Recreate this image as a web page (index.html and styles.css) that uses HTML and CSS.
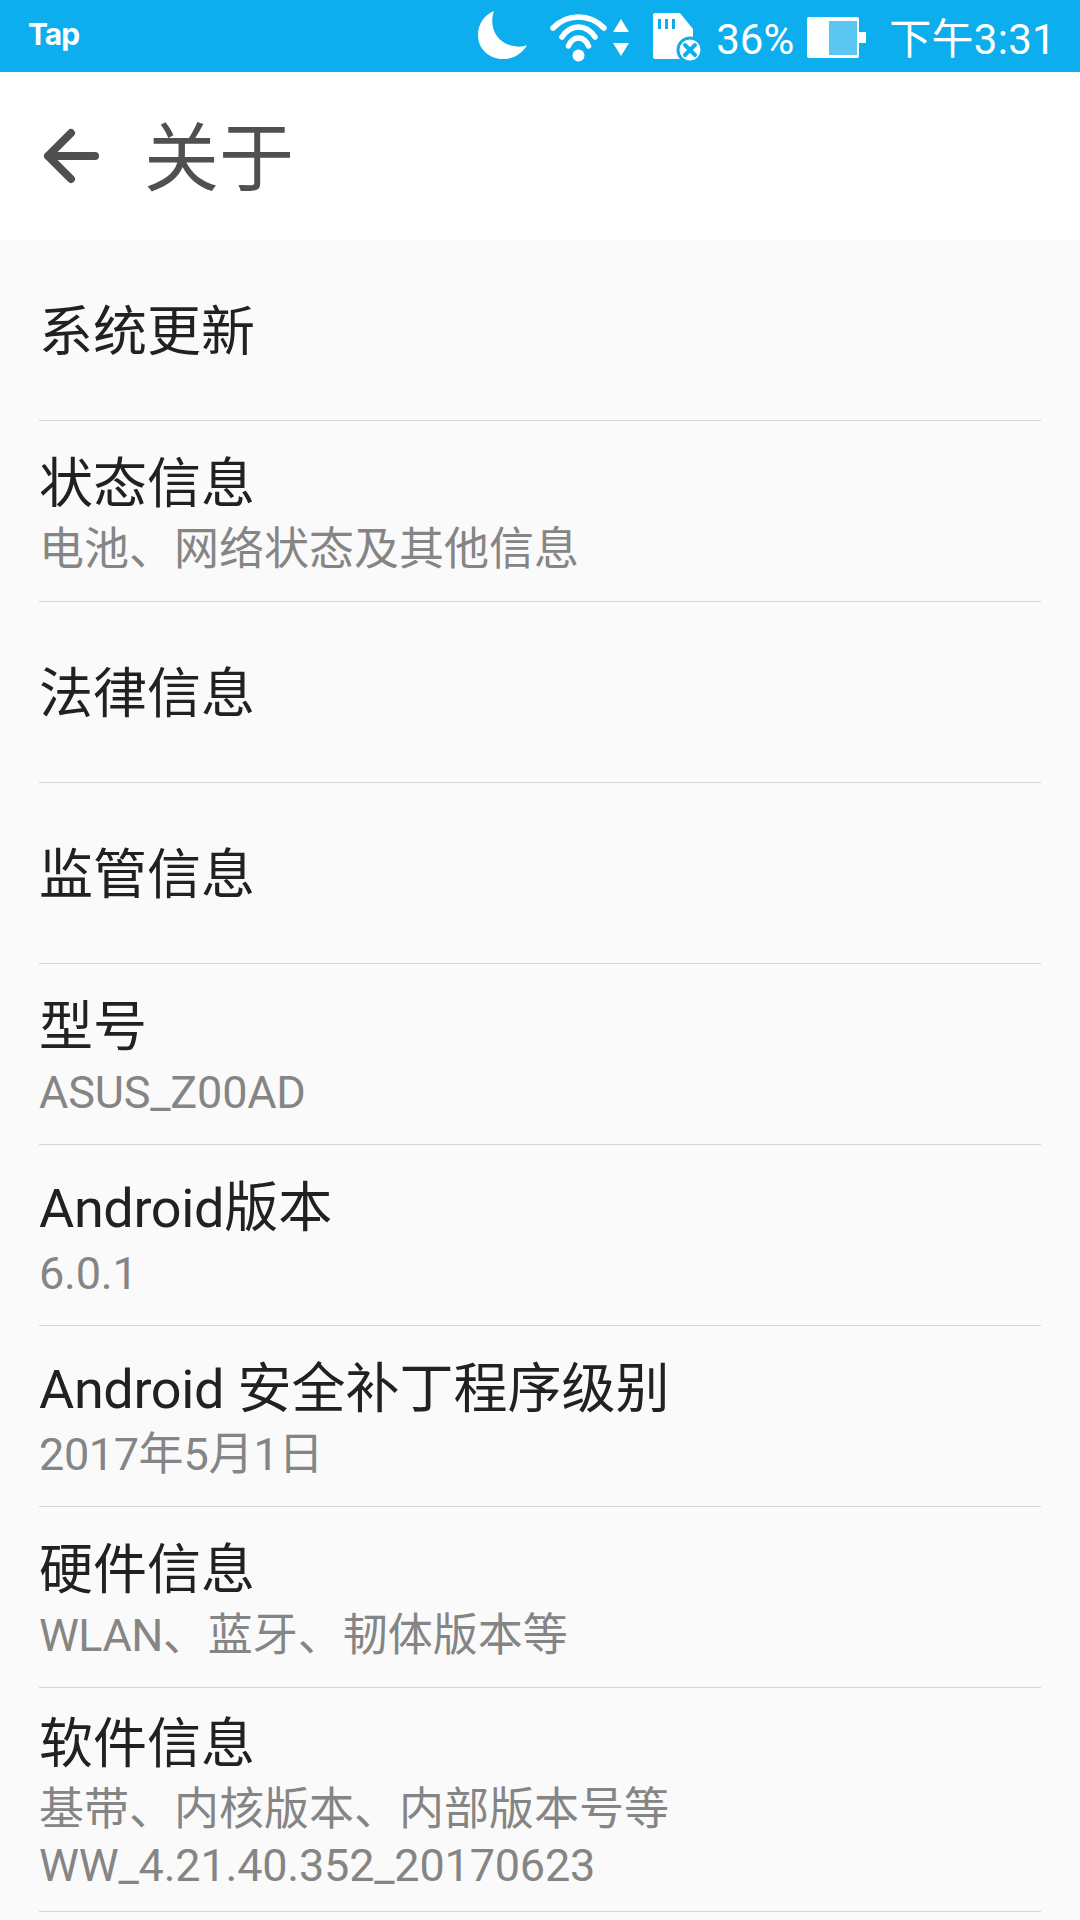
FILE: index.html
```html
<!DOCTYPE html>
<html lang="zh-CN">
<head>
<meta charset="utf-8">
<title>关于</title>
<link rel="stylesheet" href="styles.css">
</head>
<body>
<div class="status">
  <span class="tap">Tap</span>
  <div class="status-right">
    <svg class="ic-moon" width="49" height="48" viewBox="0 0 49 48"><path fill="#fff" d="M16 0C6 4 0 13 0 24c0 14 11 24 25 24 10 0 19-5 24-14-4 2-9 2-13 1C20 33 10 17 16 0z"/></svg>
    <svg class="ic-wifi" width="57" height="48" viewBox="0 0 57 48"><g fill="none" stroke="#fff" stroke-width="5.500" stroke-linecap="round"><path d="M3 14C17-.7 40-.7 54 14"/><path d="M12 23C21 9.700 36 9.700 45 23"/><path d="M18.500 32C23 21.300 34 21.300 38.500 32"/></g><circle cx="28.500" cy="41.500" r="6" fill="#fff"/></svg>
    <svg class="ic-updown" width="16" height="37" viewBox="0 0 16 37"><path fill="#fff" d="M8 0l8 13H0zM0 24h16L8 37z"/></svg>
    <svg class="ic-sd" width="49" height="49" viewBox="0 0 49 49"><path fill="#fff" d="M2 0h25l13 16v18L28 46H2a2 2 0 0 1-2-2V2a2 2 0 0 1 2-2z"/><path fill="#0daeed" d="M5 6h3v10H5zM12 6h3v10h-3zM19 6h3v10h-3z"/><circle cx="37" cy="37" r="12" fill="#fff" stroke="#0daeed" stroke-width="3"/><path stroke="#0daeed" stroke-width="4" stroke-linecap="round" d="M32 32l10 10M42 32l-10 10"/></svg>
    <span class="pct">36%</span>
    <svg class="ic-batt" width="59" height="41" viewBox="0 0 59 41"><path fill="#fff" d="M2 0h48a2 2 0 0 1 2 2v13h6a1 1 0 0 1 1 1v9a1 1 0 0 1-1 1h-6v13a2 2 0 0 1-2 2H2a2 2 0 0 1-2-2V2a2 2 0 0 1 2-2z"/><rect x="22" y="4" width="28" height="34" fill="#5cc6f3"/></svg>
    <span class="time">下午3:31</span>
  </div>
</div>
<header class="bar">
  <svg class="back" width="56" height="56" viewBox="0 0 56 56"><path fill="none" stroke="#505050" stroke-width="8" stroke-linecap="round" stroke-linejoin="round" d="M52 28H5M28 5L5 28l23 23"/></svg>
  <h1 class="title">关于</h1>
</header>
<main class="list">
  <div class="item"><div class="t">系统更新</div></div>
  <div class="item"><div class="t">状态信息</div><div class="s">电池、网络状态及其他信息</div></div>
  <div class="item"><div class="t">法律信息</div></div>
  <div class="item"><div class="t">监管信息</div></div>
  <div class="item"><div class="t">型号</div><div class="s"><span class="lat-s">ASUS_Z00AD</span></div></div>
  <div class="item"><div class="t"><span class="lat-t">Android</span>版本</div><div class="s"><span class="lat-s">6.0.1</span></div></div>
  <div class="item"><div class="t"><span class="lat-t">Android</span> 安全补丁程序级别</div><div class="s"><span class="lat-n">2017</span>年<span class="lat-n">5</span>月<span class="lat-n">1</span>日</div></div>
  <div class="item"><div class="t">硬件信息</div><div class="s"><span class="lat-w">WLAN</span>、蓝牙、韧体版本等</div></div>
  <div class="item tall"><div class="t">软件信息</div><div class="s">基带、内核版本、内部版本号等<br><span class="lat-s">WW_4.21.40.352_20170623</span></div></div>
</main>
</body>
</html>
```
FILE: styles.css
```css
* { box-sizing: border-box; margin: 0; padding: 0; }
html, body { width: 1080px; height: 1920px; overflow: hidden; }
body { background: #fafafa; font-family: Roboto, "Noto Sans CJK SC", sans-serif; }
.status { height: 72px; background: #0daeed; display: flex; align-items: center; justify-content: space-between; padding: 0 24px 0 28px; color: #fff; }
.tap { font: bold 30px/1 Inter, sans-serif; letter-spacing: -1px; margin-bottom: 4px; }
.status-right { display: flex; align-items: center; }
.ic-moon { margin-right: 23px; margin-bottom: 2px; }
.ic-wifi { margin-right: 6px; margin-top: 4px; }
.ic-updown { margin-right: 24px; margin-top: 3px; }
.ic-sd { margin-right: 14px; margin-top: 3px; }
.pct { font-size: 42px; line-height: 65px; margin-top: 7px; margin-right: 13px; }
.ic-batt { margin-right: 23px; margin-top: 3px; }
.time { font-size: 42px; line-height: 65px; margin-top: 7px; letter-spacing: 0.3px; }
.bar { height: 168px; background: #fff; display: flex; align-items: center; padding-left: 43px; }
.back { margin-right: 45px; }
.title { font-size: 75px; font-weight: 400; color: #505050; line-height: 1; margin-top: 6px; }
.list { padding: 0 39px; }
.item { height: 181px; border-bottom: 1px solid #d6d6d6; display: flex; flex-direction: column; justify-content: center; padding-top: 6px; }
.item.tall { height: 224px; }
.t { font-size: 54px; color: #212121; line-height: 68px; }
.s { font-size: 45px; color: #858585; line-height: 56px; margin-top: 3px; }
.lat-t { letter-spacing: -0.35px; }
.lat-s { letter-spacing: -0.2px; }
.lat-n { letter-spacing: -0.4px; }
.lat-w { letter-spacing: -0.6px; }
```
